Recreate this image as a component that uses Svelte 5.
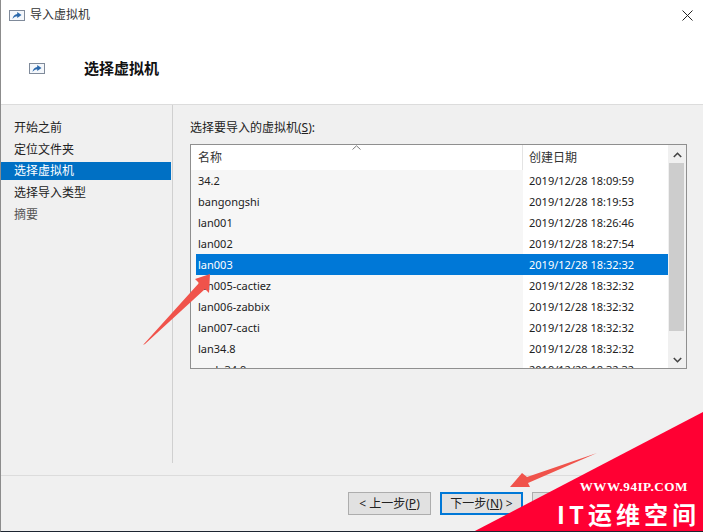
<script>
  const steps = [
    { label: '开始之前' },
    { label: '定位文件夹' },
    { label: '选择虚拟机', active: true },
    { label: '选择导入类型' },
    { label: '摘要', muted: true }
  ];
  const rows = [
    ['34.2', '2019/12/28 18:09:59'],
    ['bangongshi', '2019/12/28 18:19:53'],
    ['lan001', '2019/12/28 18:26:46'],
    ['lan002', '2019/12/28 18:27:54'],
    ['lan003', '2019/12/28 18:32:32', true],
    ['lan005-cactiez', '2019/12/28 18:32:32'],
    ['lan006-zabbix', '2019/12/28 18:32:32'],
    ['lan007-cacti', '2019/12/28 18:32:32'],
    ['lan34.8', '2019/12/28 18:32:32'],
    ['node34.9', '2019/12/28 18:32:32']
  ];
</script>

{#snippet appIcon()}
  <svg class="appicon" width="16" height="11" viewBox="0 0 16 11">
    <rect x="0.5" y="0.5" width="15" height="10" fill="#f4f7fb" stroke="#7f8a9a" />
    <path d="M3.5 9 C3.8 6 6 4.2 8.2 4 L8.2 2 L12.5 5 L8.2 8 L8.2 6.2 C6.4 6.2 5 7.2 3.5 9Z" fill="#2a68ab" />
  </svg>
{/snippet}

<div class="window">
  <header class="top">
    <div class="titlebar">
      {@render appIcon()}
      <span class="title">导入虚拟机</span>
      <svg class="close" width="11" height="11" viewBox="0 0 11 11">
        <path d="M0.5 0.5 L10.5 10.5 M10.5 0.5 L0.5 10.5" stroke="#222" fill="none" />
      </svg>
    </div>
    <div class="heading">
      {@render appIcon()}
      <h1>选择虚拟机</h1>
    </div>
  </header>

  <main class="body">
    <nav class="steps">
      {#each steps as s}
        <div class="step" class:active={s.active} class:muted={s.muted}>{s.label}</div>
      {/each}
    </nav>
    <section class="content">
      <div class="label">选择要导入的虚拟机(<u>S</u>):</div>
      <div class="list">
        <div class="table">
          <div class="thead">
            <div class="th name">名称
              <svg class="sort" width="9" height="5" viewBox="0 0 9 5"><path d="M0.5 4.5 L4.5 0.8 L8.5 4.5" fill="none" stroke="#7d7d7d" /></svg>
            </div>
            <div class="th date">创建日期</div>
          </div>
          <div class="rows">
            {#each rows as r}
              <div class="row" class:selected={r[2]}>
                <div class="cell name">{r[0]}</div>
                <div class="cell date">{r[1]}</div>
              </div>
            {/each}
          </div>
        </div>
        <div class="scroll">
          <svg class="chev" width="9" height="6" viewBox="0 0 9 6"><path d="M0.8 5 L4.5 1.3 L8.2 5" fill="none" stroke="#444" stroke-width="1.6" /></svg>
          <div class="track"><div class="thumb"></div></div>
          <svg class="chev" width="9" height="6" viewBox="0 0 9 6"><path d="M0.8 1 L4.5 4.7 L8.2 1" fill="none" stroke="#444" stroke-width="1.6" /></svg>
        </div>
      </div>
    </section>
  </main>

  <footer class="foot">
    <button class="btn">&lt; 上一步(<u>P</u>)</button>
    <button class="btn primary">下一步(<u>N</u>) &gt;</button>
    <button class="btn">完成(<u>F</u>)</button>
  </footer>

  <svg class="overlay" width="703" height="532" viewBox="0 0 703 532">
    <polygon points="143,345 199,283 195,279 210,274 209,293 205,289 145,344" fill="#f0534b" />
    <polygon points="597,453 527,477 522,473 510,487 530,487 528,483" fill="#f0534b" />
    <polygon points="703,412 703,532 473,532" fill="#ff0033" />
  </svg>
  <div class="mark">
    <div class="url">WWW.94IP.COM</div>
    <div class="brand">IT运维空间</div>
  </div>
</div>

<style>
  :global(body) { margin: 0; }
  .window {
    position: relative;
    width: 703px;
    height: 532px;
    overflow: hidden;
    display: flex;
    flex-direction: column;
    box-sizing: border-box;
    border-left: 1px solid #8c8c8c;
    border-bottom: 1px solid #1c2430;
    background: #f0f0f0;
    color: #1a1a1a;
    font: 12px/18px "Noto Sans", "Noto Sans CJK SC", sans-serif;
  }
  .top {
    height: 104px;
    flex: none;
    background: #fff;
    border-bottom: 1px solid #dcdcdc;
  }
  .titlebar {
    display: flex;
    align-items: center;
    height: 30px;
    padding-left: 8px;
    padding-right: 10px;
  }
  .title { margin-left: 5px; color: #333; }
  .close { margin-left: auto; }
  .heading {
    display: flex;
    align-items: center;
    padding: 28px 0 0 28px;
  }
  .heading h1 {
    margin: 0 0 0 39px;
    font-size: 15px;
    line-height: 20px;
    font-weight: 700;
    color: #111;
  }
  .appicon { flex: none; }

  .body { flex: 1; display: flex; min-height: 0; }
  .steps {
    width: 171px;
    flex: none;
    padding-top: 13px;
    height: 345px;
    display: flex;
    flex-direction: column;
    gap: 3.75px;
    border-right: 1px solid #d0d0d0;
  }
  .step { height: 18px; padding-left: 13px; color: #222; line-height: 20px; }
  .step.active { background: #0070c4; color: #fff; line-height: 18px; margin-right: 1px; }
  .step.muted { color: #555; }

  .content { padding: 14px 0 0 17px; flex: 1; }
  .label { height: 25px; color: #222; }
  .list {
    width: 495px;
    height: 223px;
    display: flex;
    border: 1px solid #8f8f8f;
    background: #fff;
  }
  .table { width: 477px; overflow: hidden; }
  .thead { display: flex; height: 25px; background: #fff; position: relative; }
  .th { line-height: 25px; color: #333; position: relative; }
  .th.name { width: 332px; padding-left: 7px; box-sizing: border-box; border-right: 1px solid #e4e4e4; }
  .th.date { padding-left: 6px; }
  .sort { position: absolute; left: 161px; top: 0; }
  .rows {
    background: linear-gradient(90deg, #f6f6f6 332px, #fff 332px);
    padding-left: 5px;
    height: 198px;
    overflow: hidden;
    font-size: 11px;
  }
  .row { display: flex; height: 21px; line-height: 21px; color: #222; }
  .row .name { width: 327px; padding-left: 2px; box-sizing: border-box; }
  .row .date { padding-left: 6px; }
  .row.selected { background: #0078d7; color: #fff; }

  .scroll {
    width: 18px;
    background: #f0f0f0;
    display: flex;
    flex-direction: column;
    align-items: center;
  }
  .chev { flex: none; margin: 7px 0 5px; }
  .track { flex: 1; width: 100%; }
  .thumb { width: 15px; height: 168px; margin-left: 1px; background: #cdcdcd; }

  .foot {
    height: 56px;
    flex: none;
    box-sizing: border-box;
    border-top: 1px solid #dcdcdc;
    display: flex;
    align-items: flex-start;
    gap: 9px;
    padding: 16px 0 0 347px;
  }
  .btn {
    width: 83px;
    height: 23px;
    box-sizing: border-box;
    padding: 0;
    border: 1px solid #adadad;
    background: #e1e1e1;
    color: #222;
    font: inherit;
    line-height: 20px;
  }
  .btn.primary { border: 2px solid #0078d7; line-height: 18px; }

  .overlay { position: absolute; left: -1px; top: 0; pointer-events: none; }
  .mark {
    position: absolute;
    right: 0;
    bottom: 0;
    width: 146px;
    height: 46px;
    color: #fff;
    font-weight: 700;
  }
  .url {
    position: absolute;
    right: 15px;
    top: -5px;
    font: 700 13.2px/14px "Liberation Serif", serif;
    letter-spacing: 0.5px;
    white-space: nowrap;
  }
  .brand {
    position: absolute;
    left: 0;
    top: 14px;
    font: 700 24px/30px "Noto Sans CJK SC", sans-serif;
    letter-spacing: 4px;
    white-space: nowrap;
  }
</style>
